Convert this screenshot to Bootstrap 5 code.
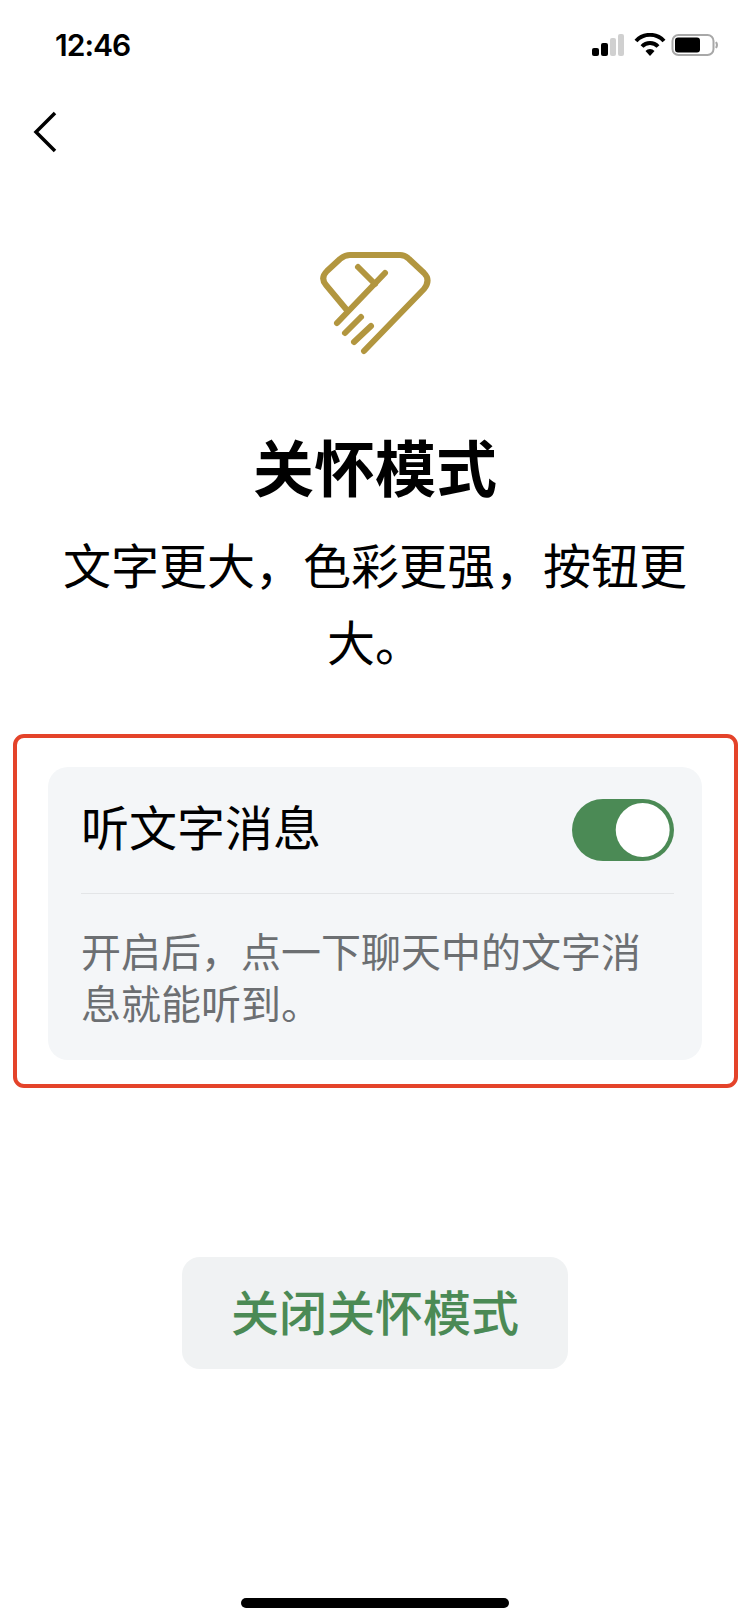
<!DOCTYPE html>
<html lang="zh">
<head>
  <meta charset="UTF-8">
  <meta name="viewport" content="width=device-width, initial-scale=1">
  <title>关怀模式</title>
  <link href="https://cdn.jsdelivr.net/npm/bootstrap@5.3.2/dist/css/bootstrap.min.css" rel="stylesheet">
  <style>
    body {
      background: #fff;
      color: #000;
      font-family: "Liberation Sans", "Noto Sans CJK SC", sans-serif;
    }
    .screen { height: 1624px; overflow: hidden; }
    .status-bar { height: 88px; padding: 2px 30px 0 55px; }
    .status-time { font-family: "Inter", sans-serif; font-size: 30px; font-weight: 600; letter-spacing: -1px; }
    .back-link { padding: 23px 0 0 33px; height: 142px; }
    .care-icon { width: 170px; height: 140px; }
    .care-title { font-size: 61px; line-height: 80px; font-weight: 700; margin: 61px 0 18px; }
    .care-sub { font-size: 48px; line-height: 77px; padding: 0 60px; margin-bottom: 51px; }
    .mark-box { margin: 0 12px 169px 13px; padding: 29px 32px 24px 31px; border: 4px solid #e4432a; border-radius: 11px; }
    .option-card { background: #f4f6f8; border: 0; border-radius: 20px; padding: 31px 28px 29px 33px; }
    .option-name { font-size: 48px; line-height: 63px; }
    .form-switch .form-check-input.care-switch:checked {
      width: 102px; height: 62px; margin: 0; border: 0; float: none;
      background-color: #4b8a55;
      background-position: right center;
      background-image: url("data:image/svg+xml,%3csvg xmlns='http://www.w3.org/2000/svg' viewBox='-4 -4 8 8'%3e%3ccircle r='3.48' cx='-.04' fill='%23fff'/%3e%3c/svg%3e");
    }
    .form-switch.option-switch { padding: 0; margin: 0; min-height: 0; height: 62px; }
    .option-line { margin: 32px 4px 33px 0; border: 0; border-top: 1px solid #e3e5e7; opacity: 1; }
    .option-desc { font-size: 40px; line-height: 52px; color: #6c6f72; }
    .close-btn { width: 386px; height: 112px; background: #f0f2f3; border: 0; border-radius: 18px; color: #4b8a55; font-size: 48px; font-weight: 500; padding: 4px 0 0; }
    .home-bar { width: 268px; height: 10px; background: #000; border-radius: 5px; margin-bottom: 16px; }
  </style>
</head>
<body>

<div class="screen d-flex flex-column">
  <div class="status-bar d-flex justify-content-between align-items-center">
    <span class="status-time">12:46</span>
    <div class="d-flex align-items-center">
      <svg width="130" height="24" viewBox="0 0 130 24">
        <rect x="2" y="15" width="7" height="8" rx="2" fill="#000"/>
        <rect x="11" y="10" width="7" height="13" rx="2" fill="#000"/>
        <rect x="20" y="5" width="6" height="18" rx="2" fill="#d0d0d0"/>
        <rect x="28" y="1" width="6" height="22" rx="2" fill="#d0d0d0"/>
        <path d="M46 8 A19 19 0 0 1 74 8" fill="none" stroke="#000" stroke-width="4"/>
        <path d="M52 13.500 A11 11 0 0 1 68 13.500" fill="none" stroke="#000" stroke-width="4"/>
        <path d="M55.500 18 L60 23 L64.500 18 A6 6 0 0 0 55.500 18 Z" fill="#000"/>
        <rect x="82.500" y="2" width="41" height="20" rx="6" fill="none" stroke="#a8a8a8" stroke-width="2"/>
        <rect x="85" y="4.500" width="25" height="15" rx="3" fill="#000"/>
        <path d="M126 9 Q128 12 126 15" fill="none" stroke="#a8a8a8" stroke-width="2"/>
      </svg>
    </div>
  </div>

  <div class="back-link">
    <svg width="24" height="42" viewBox="0 0 24 42">
      <path d="M22 2 L3 21 L22 40" fill="none" stroke="#000" stroke-width="3.500"/>
    </svg>
  </div>

  <div class="text-center">
    <svg class="care-icon" viewBox="0 0 170 140">
      <g fill="none" stroke="#b2963f" stroke-width="6" stroke-linecap="round" stroke-linejoin="round">
        <path d="M74 121 L134 59 Q141 50 134 43 L119 29 Q115 25 110 25 L60 25 Q55 25 50 29 L37 41 Q30 48 36 55 L56 79"/>
        <path d="M47 93 L95 43"/>
        <path d="M68 37 L85 54"/>
        <path d="M55 103 L71 87"/>
        <path d="M64 112 L81 96"/>
      </g>
    </svg>
    <div class="care-title">关怀模式</div>
    <div class="care-sub">文字更大，色彩更强，按钮更大。</div>
  </div>

  <div class="mark-box">
    <div class="card option-card">
      <div class="d-flex justify-content-between align-items-center">
        <span class="option-name">听文字消息</span>
        <div class="form-check form-switch option-switch">
          <input class="form-check-input care-switch" type="checkbox" checked>
        </div>
      </div>
      <hr class="option-line">
      <div class="option-desc">开启后，点一下聊天中的文字消息就能听到。</div>
    </div>
  </div>

  <div class="text-center">
    <button class="btn close-btn" type="button">关闭关怀模式</button>
  </div>

  <div class="home-bar mx-auto mt-auto"></div>
</div>

<script src="https://cdn.jsdelivr.net/npm/bootstrap@5.3.2/dist/js/bootstrap.bundle.min.js"></script>
</body>
</html>
